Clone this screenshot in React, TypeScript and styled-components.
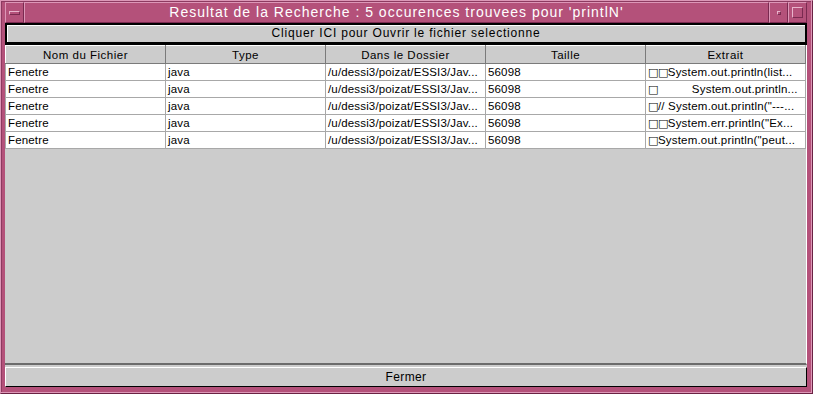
import React from 'react';
import styled, { createGlobalStyle } from 'styled-components';

const COLUMNS = ['Nom du Fichier', 'Type', 'Dans le Dossier', 'Taille', 'Extrait'];

// leading count of unknown-glyph boxes, then the rest of the line
const EXTRACTS: [number, string][] = [
  [2, 'System.out.println(list...'],
  [1, '          System.out.println...'],
  [1, '// System.out.println("---...'],
  [2, 'System.err.println("Ex...'],
  [1, 'System.out.println("peut...'],
];

const ROWS = EXTRACTS.map(([boxes, extract]) => ({
  name: 'Fenetre',
  type: 'java',
  folder: '/u/dessi3/poizat/ESSI3/Jav...',
  size: '56098',
  boxes,
  extract,
}));

function App() {
  return (
    <>
      <GlobalStyle />
      <Frame>
        <TitleBar>
          <MenuButton>
            <MenuBar />
          </MenuButton>
          <Title>Resultat de la Recherche : 5 occurences trouvees pour 'printlN'</Title>
          <WinButton>
            <MinDot />
          </WinButton>
          <WinButton>
            <MaxBox />
          </WinButton>
        </TitleBar>
        <Content>
          <DefaultButton>Cliquer ICI pour Ouvrir le fichier selectionne</DefaultButton>
          <ScrollPane>
            <Table>
              <thead>
                <tr>
                  {COLUMNS.map((col) => (
                    <HeaderCell key={col}>{col}</HeaderCell>
                  ))}
                </tr>
              </thead>
              <tbody>
                {ROWS.map((row, i) => (
                  <tr key={i}>
                    <Cell>{row.name}</Cell>
                    <Cell>{row.type}</Cell>
                    <Cell>{row.folder}</Cell>
                    <Cell>{row.size}</Cell>
                    <Cell $pre>
                      <Tofu>{'□'.repeat(row.boxes)}</Tofu>
                      {row.extract}
                    </Cell>
                  </tr>
                ))}
              </tbody>
            </Table>
          </ScrollPane>
          <PlainButton>Fermer</PlainButton>
        </Content>
      </Frame>
    </>
  );
}

const GlobalStyle = createGlobalStyle`
  body {
    margin: 0;
    background: #ffffff;
    font-family: "Liberation Sans", Arial, sans-serif;
  }
`;

const Frame = styled.div`
  box-sizing: border-box;
  width: 813px;
  height: 394px;
  display: flex;
  flex-direction: column;
  padding: 1px 5px 6px 4px;
  background: #b4517a;
  border: 1px solid;
  border-color: #dd97b7 #6a2244 #6a2244 #dd97b7;
  box-shadow: inset -1px -1px 0 #dd97b7, inset 1px 1px 0 #8c3a60;
`;

const TitleBar = styled.div`
  display: flex;
  height: 21px;
  flex-shrink: 0;
`;

const MenuButton = styled.div`
  box-sizing: border-box;
  width: 19px;
  display: flex;
  align-items: center;
  justify-content: center;
  border: 1px solid;
  border-color: #dd97b7 #7a2a50 #7a2a50 #dd97b7;
`;

const MenuBar = styled.div`
  width: 9px;
  height: 2px;
  border: 1px solid;
  border-color: #e8b4cc #7a2a50 #7a2a50 #e8b4cc;
`;

const Title = styled.div`
  flex: 1;
  box-sizing: border-box;
  border: 1px solid;
  border-color: #dd97b7 #7a2a50 #7a2a50 #dd97b7;
  color: #ffffff;
  font-size: 14px;
  line-height: 19px;
  text-align: center;
  white-space: nowrap;
  letter-spacing: 1px;
`;

const WinButton = styled.div`
  box-sizing: border-box;
  width: 19px;
  display: flex;
  align-items: center;
  justify-content: center;
  border: 1px solid;
  border-color: #dd97b7 #7a2a50 #7a2a50 #dd97b7;
`;

const MinDot = styled.div`
  width: 2px;
  height: 2px;
  border: 1px solid;
  border-color: #e8b4cc #7a2a50 #7a2a50 #e8b4cc;
`;

const MaxBox = styled.div`
  width: 9px;
  height: 9px;
  border: 1px solid;
  border-color: #e8b4cc #7a2a50 #7a2a50 #e8b4cc;
`;

const Content = styled.div`
  flex: 1;
  display: flex;
  flex-direction: column;
  background: #cccccc;
  min-height: 0;
`;

const DefaultButton = styled.div`
  box-sizing: border-box;
  height: 22px;
  flex-shrink: 0;
  border: 2px solid #000000;
  border-bottom-width: 3px;
  box-shadow: inset 1px 1px 0 #ffffff;
  font-size: 12px;
  line-height: 17px;
  text-align: center;
  color: #000000;
  letter-spacing: 0.8px;
`;

const ScrollPane = styled.div`
  flex: 1;
  box-sizing: border-box;
  border-bottom: 2px solid #6b6b6b;
  border-right: 1px solid #ffffff;
  margin-bottom: 2px;
  overflow: hidden;
`;

const Table = styled.table`
  width: 801px;
  border-collapse: collapse;
  table-layout: fixed;
  font-size: 11.5px;
`;

const HeaderCell = styled.th`
  height: 17px;
  padding: 0;
  font-weight: normal;
  text-align: center;
  background: #cccccc;
  color: #000000;
  border-top: 1px solid #ffffff;
  border-left: 1px solid #ffffff;
  border-right: 1px solid #7a7a7a;
  border-bottom: 1px solid #7a7a7a;
  letter-spacing: 0.5px;
`;

const Cell = styled.td<{ $pre?: boolean }>`
  height: 16px;
  padding: 0 0 0 2px;
  background: #ffffff;
  color: #000000;
  border: 1px solid #a8a8a8;
  white-space: ${(p) => (p.$pre ? 'pre' : 'nowrap')};
  overflow: hidden;
  letter-spacing: ${(p) => (p.$pre ? '0.2px' : '0.15px')};
`;

const Tofu = styled.span`
  font-family: "DejaVu Sans", sans-serif;
  font-size: 11px;
  letter-spacing: -0.5px;
`;

const PlainButton = styled.div`
  box-sizing: border-box;
  height: 20px;
  flex-shrink: 0;
  border: 1px solid;
  border-color: #ffffff #000000 #000000 #ffffff;
  font-size: 12px;
  line-height: 18px;
  text-align: center;
  color: #000000;
  letter-spacing: 0.4px;
`;

export default App;
